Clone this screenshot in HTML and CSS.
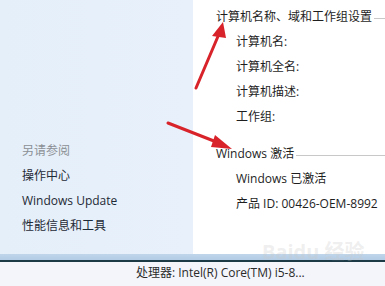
FILE: index.html
```html
<!DOCTYPE html>
<html lang="zh-CN">
<head>
    <meta charset="UTF-8">
    <title>系统</title>
    <link rel="stylesheet" href="styles.css">
</head>
<body>

<div class="window">
    <div class="main">
        <div class="sidebar">
            <div class="side-title">另请参阅</div>
            <div class="side-link">操作中心</div>
            <div class="side-link">Windows Update</div>
            <div class="side-link">性能信息和工具</div>
        </div>
        <div class="content">
            <div class="section-head"><span>计算机名称、域和工作组设置</span><i class="rule"></i></div>
            <div class="row">计算机名:</div>
            <div class="row">计算机全名:</div>
            <div class="row">计算机描述:</div>
            <div class="row">工作组:</div>

            <div class="section-head second"><span>Windows 激活</span><i class="rule"></i></div>
            <div class="row">Windows 已激活</div>
            <div class="row">产品 ID: 00426-OEM-8992</div>
        </div>
    </div>
    <div class="footer">
        <div class="footer-band"></div>
        <div class="footer-line"></div>
        <div class="footer-text">处理器: Intel(R) Core(TM) i5-8...</div>
    </div>

    <!-- red arrows drawn over the screenshot -->
    <svg class="arrows" width="385" height="286" viewBox="0 0 385 286">
        <line x1="196" y1="88" x2="219" y2="34" stroke="#d8232a" stroke-width="3" stroke-linecap="round"/>
        <polygon points="223,22 212,36 226,38" fill="#d8232a"/>
        <line x1="168" y1="123" x2="219" y2="143" stroke="#d8232a" stroke-width="3" stroke-linecap="round"/>
        <polygon points="232,149 215,135 211,147" fill="#d8232a"/>
    </svg>
    <div class="watermark">Baidu 经验</div>
</div>

</body>
</html>
```

FILE: styles.css
```css
body {
    margin: 0;
    font-family: "Open Sans", "Noto Sans CJK SC", sans-serif;
    font-size: 12px;
    color: #1e1e1e;
}

.window {
    position: relative;
    width: 385px;
    height: 286px;
    overflow: hidden;
    display: flex;
    flex-direction: column;
}

.main {
    display: flex;
    height: 254px;
}

.sidebar {
    width: 193px;
    background: linear-gradient(to right, #e5eff9, #e8f1fb);
    display: flex;
    flex-direction: column;
    justify-content: flex-end;
    padding: 0 0 16px 22px;
    box-sizing: border-box;
}

.side-title,
.side-link {
    line-height: 25px;
    white-space: nowrap;
}

.side-title {
    color: #8b8f95;
}

.side-link {
    color: #1e2a36;
}

.content {
    flex: 1;
    background: #fff;
    padding: 4px 0 0 23px;
    white-space: nowrap;
    overflow: hidden;
}

.section-head {
    display: flex;
    align-items: center;
    line-height: 25px;
}

.section-head.second {
    margin-top: 12px;
}

.rule {
    flex: 1;
    height: 1px;
    background: #c8c8c8;
    margin: 3px 0 0 2px;
}

.row {
    line-height: 25px;
    padding-left: 20px;
}

.footer {
    flex: 1;
    display: flex;
    flex-direction: column;
}

.footer-band {
    height: 6px;
    background: linear-gradient(#bfd5ea, #b3cce5);
}

.footer-line {
    height: 2px;
    background: #1c3a46;
}

.footer-text {
    flex: 1;
    background: #f3f5fa;
    padding-left: 136px;
    line-height: 22px;
    color: #2a2a2a;
}

.arrows {
    position: absolute;
    left: 0;
    top: 0;
}

.watermark {
    position: absolute;
    left: 262px;
    top: 236px;
    font-size: 20px;
    font-weight: bold;
    color: rgba(200, 200, 200, 0.3);
}
```
